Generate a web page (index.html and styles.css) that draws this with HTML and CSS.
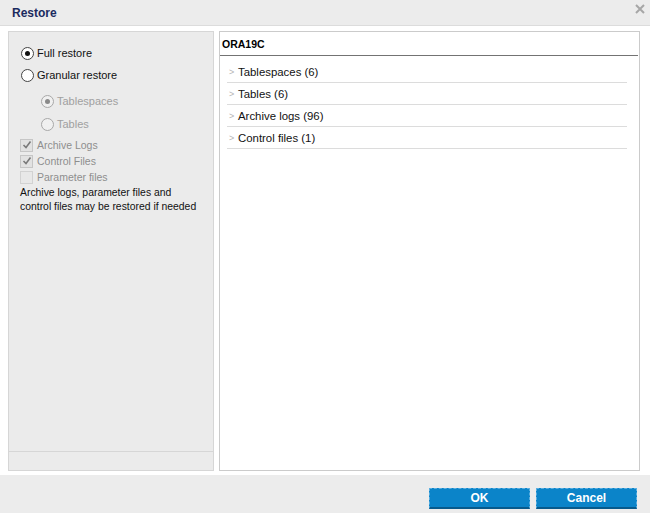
FILE: index.html
```html
<!DOCTYPE html>
<html>
<head>
<meta charset="utf-8">
<link rel="stylesheet" href="styles.css">
</head>
<body>
<div class="dialog">
  <div class="titlebar">
    <span class="title">Restore</span>
    <svg class="close" width="10" height="10" viewBox="0 0 10 10"><path d="M1 1L9 9M9 1L1 9" stroke="#a6a6a6" stroke-width="2"/></svg>
  </div>
  <div class="content">
    <div class="left">
      <div class="left-main">
        <div class="row r1"><span class="radio checked"></span><span>Full restore</span></div>
        <div class="row r2"><span class="radio"></span><span>Granular restore</span></div>
        <div class="row sub s1 dis"><span class="radio checked dis"></span><span>Tablespaces</span></div>
        <div class="row sub s2 dis"><span class="radio dis"></span><span>Tables</span></div>
        <div class="crow c1"><span class="cbox"><svg width="10" height="10" viewBox="0 0 10 10"><path d="M1.5 5L4 7.5L8.5 1.5" fill="none" stroke="#7a7a7a" stroke-width="1.6"/></svg></span><span>Archive Logs</span></div>
        <div class="crow"><span class="cbox"><svg width="10" height="10" viewBox="0 0 10 10"><path d="M1.5 5L4 7.5L8.5 1.5" fill="none" stroke="#7a7a7a" stroke-width="1.6"/></svg></span><span>Control Files</span></div>
        <div class="crow"><span class="cbox empty"></span><span>Parameter files</span></div>
        <div class="note">Archive logs, parameter files and<br>control files may be restored if needed</div>
      </div>
      <div class="left-foot"></div>
    </div>
    <div class="right">
      <div class="rhead">ORA19C</div>
      <div class="list">
        <div class="item"><span class="chev">&gt;</span>Tablespaces (6)</div>
        <div class="item"><span class="chev">&gt;</span>Tables (6)</div>
        <div class="item"><span class="chev">&gt;</span>Archive logs (96)</div>
        <div class="item"><span class="chev">&gt;</span>Control files (1)</div>
      </div>
    </div>
  </div>
  <div class="footer">
    <button class="btn ok">OK</button>
    <button class="btn cancel">Cancel</button>
  </div>
</div>
</body>
</html>
```
FILE: styles.css
```css
html, body {
  margin: 0;
  padding: 0;
  background: #ffffff;
}
body {
  font-family: "Liberation Sans", Arial, sans-serif;
  width: 650px;
  height: 513px;
  overflow: hidden;
}
.dialog {
  display: flex;
  flex-direction: column;
  width: 650px;
  height: 513px;
}
.titlebar {
  height: 25px;
  flex: none;
  background: #ececec;
  border-bottom: 1px solid #dcdcdc;
  display: flex;
  align-items: center;
  justify-content: space-between;
  padding: 0 5px 0 12px;
}
.title {
  font-weight: bold;
  font-size: 12px;
  color: #1b2a5e;
  margin-top: 1px;
}
.close {
  margin-top: -8px;
}
.content {
  flex: 1;
  display: flex;
  gap: 5px;
  padding: 5px 10px 4px 8px;
  background: #ffffff;
  min-height: 0;
}
.left {
  width: 204px;
  flex: none;
  background: #ebebeb;
  border: 1px solid #d6d6d6;
  display: flex;
  flex-direction: column;
}
.left-main {
  flex: 1;
  padding: 10px 0 0 12px;
  border-bottom: 1px solid #d6d6d6;
  font-size: 11px;
  color: #111;
}
.left-foot {
  height: 18px;
  flex: none;
}
.row {
  height: 22px;
  display: flex;
  align-items: center;
  gap: 3px;
}
.sub {
  padding-left: 20px;
  color: #a0a0a0;
}
.s1 { margin-top: 4px; }
.s2 { margin-top: 1px; }
.radio {
  width: 11px;
  height: 11px;
  border: 1px solid #444;
  border-radius: 50%;
  background: #fff;
  box-sizing: content-box;
  position: relative;
  flex: none;
}
.radio.checked::after {
  content: "";
  position: absolute;
  left: 3px;
  top: 3px;
  width: 5px;
  height: 5px;
  border-radius: 50%;
  background: #111;
}
.radio.dis {
  border-color: #a8a8a8;
  background: #f0f0f0;
}
.radio.checked.dis::after {
  background: #8a8a8a;
}
.crow {
  height: 16px;
  display: flex;
  align-items: center;
  gap: 4px;
  font-size: 10.5px;
  color: #8e8e8e;
  margin-left: -1px;
}
.c1 { margin-top: 2px; }
.cbox {
  width: 11px;
  height: 11px;
  border: 1px solid #c6c6c6;
  background: #e2e2e2;
  display: flex;
  align-items: center;
  justify-content: center;
  flex: none;
}
.cbox.empty {
  background: #e8e8e8;
  border-color: #d2d2d2;
}
.note {
  margin-top: 1px;
  margin-left: -1px;
  font-size: 10.4px;
  line-height: 14px;
  color: #111;
}
.right {
  flex: 1;
  border: 1px solid #cbcbcb;
  background: #fff;
  display: flex;
  flex-direction: column;
}
.rhead {
  height: 23px;
  border-bottom: 1px solid #737373;
  margin-right: 1px;
  padding-left: 2px;
  display: flex;
  align-items: center;
  font-weight: bold;
  font-size: 10.5px;
  color: #000;
}
.list {
  margin: 5px 12px 0 7px;
}
.item {
  height: 21px;
  border-bottom: 1px solid #dcdcdc;
  display: flex;
  align-items: center;
  font-size: 11.4px;
  color: #111;
}
.chev {
  color: #b4b4b4;
  font-size: 9px;
  width: 11px;
  padding-left: 2px;
  box-sizing: border-box;
}
.footer {
  height: 38px;
  flex: none;
  background: #ececec;
  display: flex;
  justify-content: flex-end;
  align-items: flex-start;
  gap: 6px;
  padding: 13px 13px 0 0;
  box-sizing: border-box;
}
.btn {
  height: 21px;
  border: 1px dashed #5aaee0;
  border-bottom: 2px solid #075a8c;
  background: #0b84c9;
  color: #fff;
  font-family: "Liberation Sans", Arial, sans-serif;
  font-weight: bold;
  font-size: 12px;
  padding: 0;
}
.ok { width: 101px; }
.cancel { width: 101px; }
```
